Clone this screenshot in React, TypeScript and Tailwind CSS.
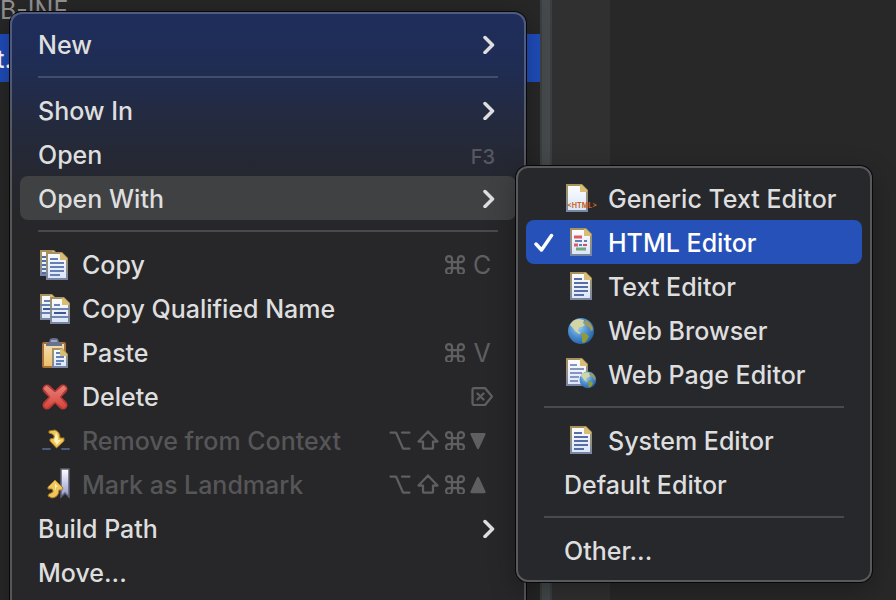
import type { ReactNode } from "react";

const PAPER_LINES = [9, 13, 17, 21, 25];

function Page({ x, y, w, h, id }: { x: number; y: number; w: number; h: number; id: string }) {
  const r = x + w;
  const b = y + h;
  return (
    <g>
      <defs>
        <linearGradient id={`${id}-edge`} x1="0" y1="0" x2="0" y2="1">
          <stop offset="0" stopColor="#a8935a" />
          <stop offset="0.5" stopColor="#96917c" />
          <stop offset="1" stopColor="#7686a6" />
        </linearGradient>
        <linearGradient id={`${id}-fill`} x1="0" y1="0" x2="0" y2="1">
          <stop offset="0" stopColor="#fbfcff" />
          <stop offset="1" stopColor="#dbe6f8" />
        </linearGradient>
      </defs>
      <path d={`M${x} ${y}H${r - 6}L${r} ${y + 6}V${b}H${x}Z`} fill={`url(#${id}-edge)`} />
      <path d={`M${x + 2} ${y + 2}H${r - 8}V${y + 8}H${r - 2}V${b - 2}H${x + 2}Z`} fill={`url(#${id}-fill)`} />
      <path d={`M${r - 8} ${y + 1}V${y + 8}H${r - 1}V${y + 6}L${r - 6} ${y + 1}Z`} fill="#d9bd72" />
    </g>
  );
}

function Icon({ children }: { children: ReactNode }) {
  return (
    <svg viewBox="0 0 32 32" className="size-8 shrink-0 overflow-visible" aria-hidden="true">
      {children}
    </svg>
  );
}

const CopyIcon = () => (
  <Icon>
    <Page x={2} y={2} w={20} h={26} id="copy-back" />
    <path d="M4 9H8M4 13H8M4 17H8M4 21H8M4 25H8" stroke="#526ea6" strokeWidth="2" />
    <Page x={8} y={4} w={22} h={28} id="copy-front" />
    <path d="M12 11H20M12 15H26M12 19H26M12 23H26M12 27H22" stroke="#6480b6" strokeWidth="2" />
  </Icon>
);

const CopyNameIcon = () => (
  <Icon>
    <Page x={2} y={2} w={18} h={26} id="name-back" />
    <path d="M6 9H13M2 13H14M2 21H13" stroke="#6880b0" strokeWidth="2" />
    <path d="M5 17H13" stroke="#3e5796" strokeWidth="2" />
    <Page x={12} y={5} w={20} h={27} id="name-front" />
    <path d="M16 13H22M12 17H32M12 25H32" stroke="#7084b0" strokeWidth="2" />
    <path d="M16 21H28" stroke="#3e5796" strokeWidth="2" />
  </Icon>
);

const PasteIcon = () => (
  <Icon>
    <defs>
      <linearGradient id="board" x1="0" y1="0" x2="0" y2="1">
        <stop offset="0" stopColor="#f2dfb6" />
        <stop offset="1" stopColor="#edbf66" />
      </linearGradient>
    </defs>
    <rect x="5" y="7" width="22" height="24" rx="1" fill="url(#board)" stroke="#a8713c" strokeWidth="2" />
    <path d="M8 10V8L11 6L12 3Q13 2 16 2Q19 2 20 3L21 6L24 8V10Z" fill="#66728f" />
    <path d="M13 4H19V6H13Z" fill="#9ca6bc" />
    <Page x={14} y={12} w={16} h={20} id="paste" />
    <path d="M18 17H22M18 21H26M18 25H26M18 28H23" stroke="#6480b6" strokeWidth="2" />
  </Icon>
);

const DeleteIcon = () => (
  <Icon>
    <defs>
      <linearGradient id="cross" x1="0" y1="0" x2="0" y2="1">
        <stop offset="0" stopColor="#e58078" />
        <stop offset="1" stopColor="#d6453c" />
      </linearGradient>
    </defs>
    <path d="M9 9L25 25M25 9L9 25" stroke="#b93a34" strokeWidth="9" strokeLinecap="round" />
    <path
      d="M8.500 6L17 13L25.500 6L28 8.500L21 17L28 25.500L25.500 28L17 21L8.500 28L6 25.500L13 17L6 8.500Z"
      fill="url(#cross)"
      stroke="url(#cross)"
      strokeWidth="1"
      strokeLinejoin="round"
    />
  </Icon>
);

const RemoveContextIcon = () => (
  <Icon>
    <path
      d="M11 7L17 6Q22 8 22 14L26 14L26 17L18.500 24L12 17L12 15L16 14Q17 10 11 9Z"
      fill="#efc65a"
      stroke="#a87a22"
      strokeWidth="1"
      strokeLinejoin="round"
    />
    <path d="M18 8Q20 11 20 16H23L19 21L16 17" fill="#fff2b4" />
    <path d="M5 25H12M24 25H31" stroke="#4b5a76" strokeWidth="2" strokeLinecap="round" />
  </Icon>
);

const LandmarkIcon = () => (
  <Icon>
    <defs>
      <linearGradient id="ribbon" x1="0" y1="0" x2="0" y2="1">
        <stop offset="0" stopColor="#ffffff" />
        <stop offset="1" stopColor="#8d95cc" />
      </linearGradient>
    </defs>
    <path d="M23 1H31V29L27 25L23 29Z" fill="url(#ribbon)" stroke="#5d6070" strokeWidth="1.500" />
    <path
      d="M17 12L25 20L24 22H21Q21 29 14 30L10 28L11 26L15 24Q15 22 14 21L10 21V19Z"
      fill="#efc65a"
      stroke="#a87a22"
      strokeWidth="1"
      strokeLinejoin="round"
    />
    <path d="M17 15L20 19H18L17 24Z" fill="#fff2b4" />
  </Icon>
);

const GenericIcon = () => (
  <Icon>
    <Page x={2} y={2} w={22} h={28} id="generic" />
    <text x="3" y="26" fontSize="7" fontWeight="700" fill="#c9641f" fontFamily="Inter, sans-serif">
      &lt;HTML&gt;
    </text>
  </Icon>
);

const HtmlIcon = () => (
  <Icon>
    <Page x={6} y={2} w={22} h={28} id="html" />
    <path d="M10 11H18M10 19H14" stroke="#dd5c60" strokeWidth="3" />
    <path d="M11 15H18M20 15H23M15 19H18" stroke="#617cb2" strokeWidth="2" />
    <path d="M19 19H23" stroke="#c65361" strokeWidth="2" />
    <path d="M12 23H22" stroke="#6fa781" strokeWidth="3" />
  </Icon>
);

const TextIcon = () => (
  <Icon>
    <Page x={6} y={2} w={22} h={28} id="text" />
    {PAPER_LINES.map((y, i) => (
      <path key={y} d={i === 0 || i === 4 ? `M10 ${y}H${i ? 20 : 18}` : `M10 ${y}H24`} stroke="#566da5" strokeWidth="2" />
    ))}
  </Icon>
);

function Globe() {
  return (
    <g>
      <defs>
        <radialGradient id="sea" cx="0.400" cy="0.350" r="0.700">
          <stop offset="0" stopColor="#a4d0f2" />
          <stop offset="0.500" stopColor="#4f92d4" />
          <stop offset="1" stopColor="#245fa6" />
        </radialGradient>
      </defs>
      <circle cx="17" cy="17" r="13" fill="url(#sea)" />
      <path d="M6 11Q9 5 15 5L20 6L19 9L21 11L18 13L15 13L14 17L17 19L15 20L11 17L9 14Z" fill="#d3d5a4" />
      <path d="M22 6Q28 9 29 16L27 17L25 13L22 12L20 9Z" fill="#a09a58" />
      <path d="M17 19L21 19L25 22L23 26L20 29L18 28L18 24Z" fill="#8f9c37" />
    </g>
  );
}

const BrowserIcon = () => (
  <Icon>
    <Globe />
  </Icon>
);

const WebPageIcon = () => (
  <Icon>
    <Page x={2} y={0} w={22} h={28} id="webpage" />
    <path d="M6 7H13M6 11H20M6 15H18M6 19H15M6 23H14" stroke="#8796bf" strokeWidth="2" />
    <g transform="translate(13 11) scale(0.640)">
      <Globe />
    </g>
  </Icon>
);

const Chevron = () => (
  <svg viewBox="0 0 12 20" className="h-5 w-3" fill="none" stroke="#dedee0" strokeWidth="3.500" strokeLinecap="round" strokeLinejoin="round" aria-hidden="true">
    <path d="M2 3.500L9.500 11L2 18.500" />
  </svg>
);

const Check = () => (
  <svg viewBox="0 0 20 20" className="size-5" fill="none" stroke="#ffffff" strokeWidth="3.500" strokeLinecap="round" strokeLinejoin="round" aria-hidden="true">
    <path d="M2 12L7.500 18L17.500 3.500" />
  </svg>
);

function Glyph({ children, w = "w-5" }: { children: ReactNode; w?: string }) {
  return (
    <svg viewBox={w === "w-5" ? "0 0 20 20" : "0 0 22 20"} className={`h-5 ${w}`} fill="none" stroke="#5f5f61" strokeWidth="2.250" strokeLinecap="round" strokeLinejoin="round" aria-hidden="true">
      {children}
    </svg>
  );
}

const Command = () => (
  <Glyph>
    <path d="M7 8V5A3 3 0 1 0 4 8H16A3 3 0 1 0 13 5V17A3 3 0 1 0 16 14H4A3 3 0 1 0 7 17Z" />
  </Glyph>
);
const Option = () => (
  <Glyph w="w-[22px]">
    <path d="M1.500 2.500H7L14 18.500H20.500M13 2.500H20.500" />
  </Glyph>
);
const Shift = () => (
  <Glyph w="w-[22px]">
    <path d="M11 1.500L20.500 11.500H16V18Q16 18.500 15.500 18.500H6.500Q6 18.500 6 18V11.500H1.500Z" />
  </Glyph>
);
const Erase = () => (
  <Glyph w="w-[22px]">
    <path d="M3 2H14L21 10.500L14 19H3Q1.500 19 1.500 17V4Q1.500 2 3 2ZM6.500 7.500L12.500 13.500M12.500 7.500L6.500 13.500" />
  </Glyph>
);
const Triangle = ({ down = false }: { down?: boolean }) => (
  <Glyph>
    <path d={down ? "M2.500 4H15.500L9 18Z" : "M9 4L15.500 18H2.500Z"} fill="#5f5f61" />
  </Glyph>
);

const Combo = ({ down = false }: { down?: boolean }) => (
  <span className="mr-1.5 flex items-center gap-1.5">
    <Option />
    <Shift />
    <span className="flex items-center gap-1">
      <Command />
      <Triangle down={down} />
    </span>
  </span>
);

const CommandKey = ({ letter }: { letter: string }) => (
  <span className="flex items-center gap-2 pr-1 text-[#5f5f61]">
    <Command />
    <span className="w-[18px] pt-0.5 text-center font-normal">{letter}</span>
  </span>
);

type ItemProps = { label: string; icon?: ReactNode; end?: ReactNode; active?: boolean; disabled?: boolean };

function Item({ label, icon, end, active, disabled }: ItemProps) {
  return (
    <button
      type="button"
      role="menuitem"
      disabled={disabled}
      className={`flex h-11 w-full items-center gap-3 rounded-lg pr-[21px] pl-[18px] text-left ${active ? "bg-[#404143]" : ""} ${disabled ? "text-[#565658]" : ""}`}
    >
      {icon}
      <span className="flex-1 pt-0.5">{label}</span>
      {end}
    </button>
  );
}

function SubItem({ label, icon, checked }: { label: string; icon?: ReactNode; checked?: boolean }) {
  return (
    <button
      type="button"
      role="menuitemradio"
      aria-checked={!!checked}
      className={`flex h-11 w-full items-center rounded-lg text-left ${checked ? "bg-[#2551b8] text-white" : ""}`}
    >
      <span className="w-[38px] shrink-0 pl-2">{checked && <Check />}</span>
      <span className="flex items-center gap-3">
        {icon}
        <span className="pt-0.5">{label}</span>
      </span>
    </button>
  );
}

const Separator = () => <hr className="mx-[18px] my-2.5 h-0.5 border-0 bg-white/16" />;

export default function App() {
  return (
    <main className="relative h-screen overflow-hidden bg-[#282828] font-['Inter','Liberation_Sans',sans-serif] text-[25px] leading-8 font-medium text-[#dededf]">
      <div className="flex h-full">
        <div className="w-[540px] bg-[#272727]">
          <div className="flex h-[34px] items-start font-normal text-[#929292]">
            <span className="-mt-1.5">B-INF</span>
          </div>
          <div className="flex h-12 items-center bg-[#1f4cb9] pt-0.5 text-white">
            <span className="-ml-1">t.</span>
          </div>
        </div>
        <div className="w-3 border-x-2 border-[#3b3f41] bg-[#45494b]" />
        <div className="w-[58px] bg-[#303030]" />
        <div className="flex-1" />
      </div>

      <div
        role="menu"
        aria-label="Context menu"
        className="absolute top-3 -bottom-5 left-2.5 w-[516px] rounded-xl border-2 border-white/22 bg-[linear-gradient(to_bottom,#1e2d5b_0px,#1f2d55_50px,#242a3e_110px,#26272c_180px,#272729_240px)] bg-origin-border p-2 shadow-[0_0_0_1px_#08080a,0_4px_24px_rgba(0,0,0,0.3)]"
      >
        <Item label="New" end={<Chevron />} />
        <Separator />
        <Item label="Show In" end={<Chevron />} />
        <Item label="Open" end={<span className="pt-1.5 text-xl text-[#57585f]">F3</span>} />
        <Item label="Open With" active end={<Chevron />} />
        <Separator />
        <Item label="Copy" icon={<CopyIcon />} end={<CommandKey letter="C" />} />
        <Item label="Copy Qualified Name" icon={<CopyNameIcon />} />
        <Item label="Paste" icon={<PasteIcon />} end={<CommandKey letter="V" />} />
        <Item
          label="Delete"
          icon={<DeleteIcon />}
          end={
            <span className="mr-0.5">
              <Erase />
            </span>
          }
        />
        <Item label="Remove from Context" icon={<RemoveContextIcon />} end={<Combo down />} disabled />
        <Item label="Mark as Landmark" icon={<LandmarkIcon />} end={<Combo />} disabled />
        <Item label="Build Path" end={<Chevron />} />
        <Item label="Move..." />
      </div>

      <div
        role="menu"
        aria-label="Open With"
        className="absolute top-[166px] left-[516px] w-[356px] rounded-xl border-2 border-[#58595b] bg-[#27282c] p-2 shadow-[0_0_0_1px_#08080a,0_8px_28px_rgba(0,0,0,0.3)]"
      >
        <SubItem label="Generic Text Editor" icon={<GenericIcon />} />
        <SubItem label="HTML Editor" icon={<HtmlIcon />} checked />
        <SubItem label="Text Editor" icon={<TextIcon />} />
        <SubItem label="Web Browser" icon={<BrowserIcon />} />
        <SubItem label="Web Page Editor" icon={<WebPageIcon />} />
        <Separator />
        <SubItem label="System Editor" icon={<TextIcon />} />
        <SubItem label="Default Editor" />
        <Separator />
        <SubItem label="Other..." />
      </div>
    </main>
  );
}
